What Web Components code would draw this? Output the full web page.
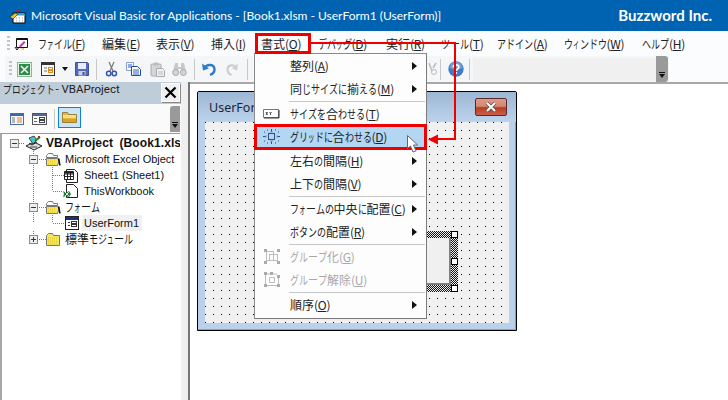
<!DOCTYPE html>
<html lang="ja"><head><meta charset="utf-8"><title>VBE</title>
<style>
html,body{margin:0;padding:0;background:#fff}
body{width:728px;height:400px;overflow:hidden;font-family:"Noto Sans CJK JP","Noto Sans",sans-serif}
</style></head><body>
<vbe-app></vbe-app>
<script>
const FONT='"Noto Sans CJK JP","Noto Sans",sans-serif';
const ICONS={
 titleapp:[16,16,'<path d="M3 5h12v10H3z" fill="#fff" stroke="#000"/><path d="M3.500 5.500h11v2h-11z" fill="#2ea3d8"/><path d="M6 1.500q3-1.500 4 1.500l-2 1.500z" fill="#c4161c"/><path d="M0 9l5-4 3 1-5 5z" fill="#f2c230" stroke="#222" stroke-width=".6"/><path d="M6 10h1M9 10h1M12 10h1M6 13h1M9 13h1M12 13h1" stroke="#999"/>'],
 menuapp:[14,14,'<path d="M2.500 1.500h11v9h-11z" fill="#fff" stroke="#111"/><path d="M3 2h10v1H3z" fill="#111"/><path d="M5 9l5-5 1.500 1.500-5 5z" fill="#c23bb0"/><path d="M1 10l2 3 2-3" fill="none" stroke="#111"/><path d="M6 12l4-1v2z" fill="#e6c52c"/>'],
 excel:[15,15,'<rect x=".5" y=".5" width="14" height="14" fill="#e8f3e8" stroke="#1c7a37" stroke-dasharray="1 1"/><rect x="2" y="2" width="11" height="11" fill="#2e8b4a"/><path d="M4 4l7 7M11 4l-7 7" stroke="#e8f5e8" stroke-width="1.600"/>'],
 form:[14,14,'<rect x=".5" y=".5" width="13" height="13" fill="#f7f7f7" stroke="#333"/><rect x="1" y="1" width="12" height="2" fill="#333"/><path d="M3 6h3M3 9h3" stroke="#777"/><rect x="7.500" y="5.500" width="4" height="2" fill="#fff" stroke="#e08b1c"/><rect x="7.500" y="8.500" width="4" height="2" fill="#fff" stroke="#e08b1c"/>'],
 save:[14,14,'<path d="M.5.500h12l1 1v12H.5z" fill="#5569bd" stroke="#414f95"/><rect x="3" y="1" width="8" height="6" fill="#e9ecf8"/><rect x="3.500" y="9" width="7" height="4.500" fill="#c8cfe8"/><rect x="7.500" y="10" width="2" height="3" fill="#414f95"/>'],
 cut:[11,15,'<path d="M3 0l4 9M8 0L4 9" stroke="#777" stroke-width="1.200" fill="none"/><circle cx="2.700" cy="11.500" r="2.200" fill="none" stroke="#2f55b5" stroke-width="1.500"/><circle cx="8.300" cy="11.500" r="2.200" fill="none" stroke="#2f55b5" stroke-width="1.500"/>'],
 copy:[15,14,'<path d="M.5.500h7v8h-7z" fill="#f4f7fd" stroke="#8aa0c8"/><path d="M5.500 4.500h6l3 3v6h-9z" fill="#fff" stroke="#1f4da0"/><path d="M7 8h6M7 10h6M7 12h6M2 3h4M2 5h3" stroke="#2a62c2"/>'],
 paste:[15,15,'<rect x="1" y="2" width="10" height="12" rx="1" fill="#d6d6d6" stroke="#aaa"/><rect x="4" y="0.500" width="4" height="3" fill="#bbb"/><path d="M6.500 6.500h6l2 2v6h-8z" fill="#f2f2f2" stroke="#aaa"/><path d="M8 10h5M8 12h5" stroke="#bbb"/>'],
 find:[15,14,'<path d="M3 1h3v4h3V1h3l2 9H9V7H6v3H1z" fill="#c8c8c8"/><circle cx="3.700" cy="10.500" r="3" fill="#d4d4d4" stroke="#aaa"/><circle cx="11.300" cy="10.500" r="3" fill="#d4d4d4" stroke="#aaa"/>'],
 undo:[14,14,'<path d="M2.500 6C5 1.500 12.500 2 12.500 7.500 12.500 10 10.500 12 8 13" fill="none" stroke="#2d7ac9" stroke-width="2.400"/><path d="M0 1.500l1 7 6-2z" fill="#2d7ac9"/>'],
 redo:[12,14,'<path d="M10 6C8 2 1.500 2.500 1.500 7.500 1.500 10 3 12 5.500 13" fill="none" stroke="#cfcfcf" stroke-width="2.200"/><path d="M12 1.500l-1 7-5-2z" fill="#cfcfcf"/>'],
 help:[16,16,'<circle cx="8" cy="8" r="7.700" fill="#3f7cc4"/><path d="M1.500 7a6.500 6.500 0 0 1 13 0q-6.500 3-13 0" fill="#6d9fd8"/><path d="M5.300 6.200q.2-2.400 2.800-2.400 2.700 0 2.700 2.200 0 1.300-1.500 2.200-1 .6-1 1.800" fill="none" stroke="#fff" stroke-width="1.700"/><rect x="7.300" y="11" width="1.800" height="1.800" fill="#fff"/>'],
 find2:[10,14,'<path d="M1 1l3 8M8 1L5 6" stroke="#bbb" stroke-width="1.500" fill="none"/><circle cx="6" cy="10" r="2.500" fill="none" stroke="#bbb"/>'],
 code:[14,12,'<rect x=".5" y=".5" width="13" height="11" fill="#f4f7fd" stroke="#4a6ea9"/><rect x="1" y="1" width="12" height="2" fill="#3f63a8"/><path d="M2 5h3M2 7h3M2 9h3" stroke="#777"/><path d="M7 5h5M7 7h5M7 9h5" stroke="#e08030"/>'],
 obj:[15,12,'<rect x=".5" y=".5" width="14" height="11" fill="#f4f7fd" stroke="#555"/><rect x="1" y="1" width="13" height="2" fill="#506a96"/><path d="M2 5.500h3M2 8.500h3" stroke="#666"/><rect x="7.500" y="4.500" width="5" height="2" fill="#fff" stroke="#444"/><rect x="7.500" y="7.500" width="5" height="2" fill="#fff" stroke="#444"/>'],
 folderbig:[15,12,'<path d="M.5 1.500h5l1 2h8v8H.5z" fill="#e8b63a" stroke="#8a6a20" stroke-width=".8"/><path d="M1 4h13v3H1z" fill="#f7e08a"/><path d="M1 8h13v3H1z" fill="#d9a32a"/>'],
 vba:[18,16,'<path d="M1 11l8-4 8 4-8 4z" fill="#ddd" stroke="#222"/><path d="M4 3l5-2 3 4-4 4z" fill="#49c4d4" stroke="#222" stroke-width=".8"/><path d="M10 6l5-4" stroke="#1a8a1a" stroke-width="2"/><path d="M13 1h2v2h-2z" fill="#c61818"/><path d="M4 8l3 2 5-3" stroke="#222" fill="none"/><path d="M5 12h7" stroke="#444"/>'],
 sheet:[14,15,'<path d="M2.500 1.500h8l3 3v10h-11z" fill="#fff" stroke="#222"/><path d="M.5 3.500h9v8h-9z" fill="#fff" stroke="#222"/><path d="M1 6h8M1 8.500h8M3.500 4v7M6.500 4v7" stroke="#222"/><rect x="1" y="4" width="8.500" height="1.500" fill="#222"/>'],
 wb:[15,16,'<path d="M3.500 1.500h7l4 4v9h-11z" fill="#fff" stroke="#222"/><path d="M0 8l3 2 3-2 2 3-2 3-3-1-3 1 1-3z" fill="#1f7a38"/><path d="M2 9l4 4M6 9l-4 4" stroke="#cfe8cf"/>'],
 uf:[14,14,'<rect x=".5" y=".5" width="13" height="13" fill="#fff" stroke="#222"/><rect x="1" y="1" width="12" height="3" fill="#1b2f8a"/><path d="M3 6.500h2M3 9.500h2" stroke="#333"/><rect x="6.500" y="5.500" width="5" height="2" fill="#fff" stroke="#333"/><rect x="6.500" y="8.500" width="5" height="2" fill="#fff" stroke="#333"/>'],
 fit:[17,14,'<path d="M.5 2.500h15v8H.5z" fill="#fff" stroke="#777"/><path d="M1 11h15V3" stroke="#333" fill="none"/><path d="M3 5l1.500 3M4.500 5L3 8M6.500 5l1 1.500 1-1.500M7.500 6.500V8" stroke="#222" fill="none" stroke-width=".8"/>'],
 grid:[17,15,'<rect x="5.500" y="4.500" width="6" height="6" fill="#b7d5ef" stroke="#2a4f80"/><path d="M8.500 0v3M8.500 12v3M0 7.500h3M14 7.500h3" stroke="#2a4f80"/><path d="M1 3h1M4 1h1M12 1h1M15 3h1M1 12h1M4 14h1M12 14h1M15 12h1" stroke="#2a4f80"/><path d="M7 3h3M7 12h3M3 6v3M14 6v3" stroke="#7aa3cc"/>'],
 group:[16,15,'<g fill="none" stroke="#bcbcbc"><rect x="2.500" y="2.500" width="7" height="9"/><rect x="5.500" y="5.500" width="8" height="6"/></g><g fill="#aaa"><rect x="0" y="0" width="3" height="3"/><rect x="13" y="0" width="3" height="3"/><rect x="0" y="12" width="3" height="3"/><rect x="13" y="12" width="3" height="3"/></g>'],
 ungroup:[16,15,'<path d="M3 2h10M1.500 3v9M14.500 3v9M3 13.500h10" stroke="#bcbcbc"/><path d="M5.500 5.500h5v5h-5z" fill="none" stroke="#bcbcbc"/><g fill="#aaa"><rect x="0" y="0" width="3" height="3"/><rect x="6" y="0" width="3" height="3"/><rect x="13" y="3" width="3" height="3"/><rect x="0" y="12" width="3" height="3"/><rect x="13" y="12" width="3" height="3"/></g>']
};
const svg=(n)=>{const i=ICONS[n];return `<svg width="${i[0]}" height="${i[1]}" viewBox="0 0 ${i[0]} ${i[1]}" style="display:block;overflow:visible">${i[2]}</svg>`};
const def=(name,css,html)=>{customElements.define(name,class extends HTMLElement{
  constructor(){super();this.attachShadow({mode:'open'})}
  connectedCallback(){const h=typeof html==='function'?html(this):html;this.shadowRoot.innerHTML=`<style>${css}</style>${h}`}
})};
const SMALL='ァィゥェォッャュョぁぃぅぇぉっゃゅょ';
function jpHtml(t,k){
  let out='';
  for(const c of t){
    if(/[\u3040-\u30ff]/.test(c)){
      const w=SMALL.includes(c)?6.5:(c==='ー'?10:9);
      out+=`<span style="display:inline-block;width:${w}px;transform:scaleX(${w/12});transform-origin:0 50%">${c}</span>`;
    } else out+=c;
  }
  if(k) out+=`<span style="letter-spacing:-.3px">(<u>${k}</u>)</span>`;
  return out;
}
def('jp-t',':host{display:inline-block;white-space:nowrap}u{text-underline-offset:1px}',e=>jpHtml(e.getAttribute('t'),e.getAttribute('k')));
def('ui-icon',':host{display:block;flex:none}',e=>svg(e.getAttribute('n')));

def('vbe-title',`:host{display:flex;align-items:center;height:31px;background:#0063b1;color:#fff;font:12px/31px Lato,"Noto Sans",sans-serif;padding-left:10px;box-sizing:border-box}
.t{margin-left:5px;white-space:nowrap;flex:1}.b{font:700 15px/31px Lato,"Noto Sans",sans-serif;margin-right:16px}`,
`<ui-icon n="titleapp"></ui-icon><span class="t">Microsoft Visual Basic for Applications - [Book1.xlsm - UserForm1 (UserForm)]</span><span class="b">Buzzword Inc.</span>`);

def('vbe-grip',':host{display:block;flex:none;width:3px;background:repeating-linear-gradient(#c4c4c4 0 2px,transparent 2px 4px)}','');

def('vbe-menubar',`:host{display:flex;align-items:center;height:25px;background:#fbfcfd;padding-left:7px;box-sizing:border-box;font-size:12px;color:#222}
vbe-grip{height:15px}ui-icon{margin:0 10px 0 4px}.m{display:flex;gap:17px}`,
()=>`<vbe-grip></vbe-grip><ui-icon n="menuapp"></ui-icon><div class="m">${[['ファイル','F',47],['編集','E',37],['表示','V',38],['挿入','I',33],['書式','O',40],['デバッグ','D',51],['実行','R',38],['ツール','T',39],['アドイン','A',50],['ウィンドウ','W',61],['ヘルプ','H',44]].map(a=>`<jp-t t="${a[0]}" k="${a[1]}" style="width:${a[2]}px"></jp-t>`).join('')}</div>`);

def('vbe-toolbar',`:host{display:flex;align-items:center;height:26px;width:664px;margin-left:5px;background:#f5f6f7;border-radius:3px 0 0 0;box-sizing:border-box;padding-left:4px}
vbe-grip{height:16px;margin-right:5px}.s{flex:none;width:1px;height:21px;background:#c8c8c8}.a{flex:none;width:0;height:0;border:3px solid transparent;border-top:4px solid #111;border-bottom:0}
.c{flex:none;width:183px;height:23px;background:#f0f0f0;margin-left:3px}.g{flex:none;width:12px;height:26px;background:#9a9a9a;border-radius:0 3px 3px 0;position:relative}
.g:after{content:"";position:absolute;left:3px;bottom:4px;width:0;height:0;border:3px solid transparent;border-top:4px solid #111;border-bottom:0}
.g:before{content:"";position:absolute;left:3px;bottom:9px;width:6px;height:1px;background:#111}`,
`<vbe-grip></vbe-grip>
<ui-icon n="excel"></ui-icon><ui-icon n="form" style="margin-left:9px"></ui-icon><i class="a" style="margin-left:7px"></i><ui-icon n="save" style="margin-left:7px"></ui-icon>
<i class="s" style="margin-left:7px"></i><ui-icon n="cut" style="margin-left:9px"></ui-icon><ui-icon n="copy" style="margin-left:9px"></ui-icon><ui-icon n="paste" style="margin-left:9px"></ui-icon><ui-icon n="find" style="margin-left:7px"></ui-icon>
<i class="s" style="margin-left:7px"></i><ui-icon n="undo" style="margin-left:7px"></ui-icon><ui-icon n="redo" style="margin-left:10px"></ui-icon><i class="s" style="margin-left:9px"></i>
<ui-icon n="find2" style="margin-left:180px"></ui-icon><i class="s" style="margin-left:2px"></i><ui-icon n="help" style="margin-left:7px"></ui-icon><i class="s" style="margin-left:5px"></i><div class="c"></div><div class="g"></div>`);

const dv=(x,a,b)=>`<path d="M${x}.5 ${a}V${b}" stroke="#7a7a7a" stroke-dasharray="1 1"/>`;
const dh=(a,b)=>`<path d="M${a} 8.500H${b}" stroke="#7a7a7a" stroke-dasharray="1 1"/>`;
const box=(x,plus)=>`<rect x="${x}.5" y="4.500" width="8" height="8" fill="#eee" stroke="#888"/><path d="M${x+2} 8.500h5" stroke="#335"/>${plus?`<path d="M${x+4}.5 6v5" stroke="#335"/>`:''}`;
const place=(n,x,y)=>`<g transform="translate(${x} ${y})">${ICONS[n][2]}</g>`;
const openF=(x)=>`<g transform="translate(${x} 2)"><path d="M.5 2.500l2-2h4l1 2h4v2h-11z" fill="#fff" stroke="#777"/><path d="M.5 5.500h11l2 1-2 6h-11z" fill="#f6e65a" stroke="#777"/><path d="M12.500 5.500l1.500 7" stroke="#111" stroke-width="1.500"/><path d="M2 7h8M2 9h8M2 11h8" stroke="#e0c62a" stroke-dasharray="1 1"/></g>`;
const closedF=(x)=>`<g transform="translate(${x} 2)"><path d="M.5 2.500l2-2h4l1 2h6v10H.5z" fill="#f6e65a" stroke="#777"/><path d="M2 5h10M2 7h10M2 9h10M2 11h10" stroke="#dcc22a" stroke-dasharray="1 1"/></g>`;
const GUT={
 root:[46,dv(33,12,16)+dh(19,25)+box(10)+place('vba',25,0)],
 excelobj:[65,dv(33,0,16)+dv(52,12,16)+dh(37,46)+box(29)+openF(46)],
 s1:[84,dv(33,0,16)+dv(52,0,16)+dh(53,64)+place('sheet',64,1)],
 tw:[84,dv(33,0,16)+dv(52,0,8)+dh(53,63)+place('wb',63,0)],
 frm:[65,dv(33,0,16)+dv(52,12,16)+dh(37,46)+box(29)+openF(46)],
 uf:[84,dv(33,0,8)+dv(52,0,8)+dh(53,65)+place('uf',65,1)],
 mod:[65,dv(33,0,8)+dh(37,46)+box(29,true)+closedF(46)]
};
def('tree-row',`:host{display:flex;height:16px;align-items:center;white-space:nowrap;font:11px/16px "Liberation Sans",sans-serif;color:#111}
svg{flex:none;display:block;margin-left:-2px}
:host([bold]) .t{font-size:12px;font-weight:700;letter-spacing:.1px;word-spacing:3px}:host([sel]) .t{background:#f0f0f0;margin-left:-2px;padding:0 3px 0 2px}
:host([j]) .t{font:12px/16px ${FONT}}`,
e=>{const g=GUT[e.getAttribute('g')];return `<svg width="${g[0]}" height="16" viewBox="0 0 ${g[0]} 16">${g[1]}</svg><span class="t"><slot></slot></span>`});

def('project-panel',`:host{display:flex;flex-direction:column;flex:none;width:181px;overflow:hidden;background:#fff}
.h{height:22px;background:#bfcddb;display:flex;font-size:11.500px;color:#222;padding-left:3px;box-sizing:border-box}
.h jp-t{line-height:15px;margin-right:1px}.h span.v{flex:1;line-height:15px;font-family:Roboto,sans-serif}.x{flex:none;width:19px;height:19px;margin:1px 1px 0 0;background:#f0f0f0;border:1px solid #fff;box-shadow:1px 1px 0 #888;box-sizing:border-box;display:flex;align-items:center;justify-content:center}
.b{height:29px;background:#fafafa;display:flex;align-items:center;padding-left:10px;box-sizing:border-box}
.b .s{width:1px;height:20px;background:#c8c8c8;margin:0 3px 0 7px}.o{width:23px;height:21px;background:#cde4f7;border:1px solid #0a84d6;box-sizing:border-box;display:flex;align-items:center;justify-content:center;margin-bottom:3px}
.g{width:10px;height:26px;background:#9a9a9a;margin-left:auto;margin-right:1px;border-radius:3px 0 0 0;position:relative}.g:after{content:"";position:absolute;left:2px;bottom:4px;border:3px solid transparent;border-top:4px solid #111;border-bottom:0}.g:before{content:"";position:absolute;left:2px;bottom:9px;width:6px;height:1px;background:#111}
.t{flex:1;border-top:1px solid #999;border-left:2px solid #a8a8a8;padding-top:1px;overflow:hidden;font-size:12px;margin-right:1px}`,
`<div class="h"><jp-t t="プロジェクト"></jp-t><span class="v">- VBAProject</span><div class="x"><svg width="13" height="13"><path d="M1.500 1.500l10 10M11.500 1.500l-10 10" stroke="#000" stroke-width="2.200"/></svg></div></div>
<div class="b"><ui-icon n="code"></ui-icon><ui-icon n="obj" style="margin-left:8px"></ui-icon><i class="s"></i><div class="o"><ui-icon n="folderbig"></ui-icon></div><div class="g"></div></div>
<div class="t">
<tree-row g="root" bold>VBAProject (Book1.xls</tree-row>
<tree-row g="excelobj">Microsoft Excel Object</tree-row>
<tree-row g="s1">Sheet1 (Sheet1)</tree-row>
<tree-row g="tw">ThisWorkbook</tree-row>
<tree-row g="frm" j><jp-t t="フォーム"></jp-t></tree-row>
<tree-row g="uf" sel>UserForm1</tree-row>
<tree-row g="mod" j><jp-t t="標準モジュール"></jp-t></tree-row>
</div>`);

def('form-window',`:host{display:flex;flex-direction:column;width:320px;height:240px;box-sizing:border-box;border:1px solid #000;background:#b9d1ea;border-radius:2px 2px 0 0;box-shadow:inset -1px -1px 0 #3cc4dc}
.c{height:30px;flex:none;display:flex;align-items:center;padding:0 9px 0 11px;background:linear-gradient(#9db6d3,#bcd3ec);font:12.500px "Noto Sans",sans-serif;color:#1a2533}
.c span{flex:1}.x{width:32px;height:18px;border:1px solid #5b2a2a;border-radius:2px;background:linear-gradient(#dd9a88 0,#d68872 45%,#b83c22 55%,#c9604a);box-sizing:border-box;display:flex;align-items:center;justify-content:center}
.g{position:relative;margin:0 7px 0 7px;height:201px;background:conic-gradient(at 1px 1px,transparent 75%,#000 0) 0 0/8px 8px,#f0f0f0}
.ctl{position:absolute;left:90px;top:109px;width:163px;height:61px;box-sizing:border-box;background:repeating-conic-gradient(#111 0 25%,#f0f0f0 0 50%) 0 0/2px 2px}
.ctl b{position:absolute;left:0;right:7px;top:7px;bottom:7px;background:#f0f0f0;border-right:2px solid #808080;border-bottom:2px solid #808080}
.ctl i{position:absolute;right:0;width:7px;height:7px;box-sizing:border-box;background:#fff;border:1px solid #000}`,
`<div class="c"><span>UserForm1</span><div class="x"><svg width="14" height="10"><path d="M3 1l8 8M11 1l-8 8" stroke="#555" stroke-width="3.500"/><path d="M3 1l8 8M11 1l-8 8" stroke="#fff" stroke-width="2"/></svg></div></div>
<div class="g"><div class="ctl"><b></b><i style="top:0"></i><i style="top:27px"></i><i style="top:54px"></i></div></div>`);

def('menu-row',`:host{display:flex;height:23px;align-items:center;font-size:12px;color:#222;white-space:nowrap;box-sizing:border-box;position:relative}
.i{flex:none;width:35px;display:flex;justify-content:center;padding-right:2px;box-sizing:border-box}
.l{flex:1}.a{flex:none;width:0;height:0;border:4px solid transparent;border-left:5px solid #111;border-right:0;margin-right:9px}
:host([disabled]){color:#a8a8a8}:host([hi]){background:#b3d7f3;box-shadow:inset 0 0 0 1px #0a6fc2}`,
e=>{const ic=e.getAttribute('icon');return `<div class="i">${ic?svg(ic):''}</div><jp-t class="l" t="${e.getAttribute('t')}" k="${e.getAttribute('k')}"></jp-t>${e.hasAttribute('arrow')?'<i class="a"></i>':''}`});
def('menu-sep',`:host{display:block;height:2px;margin-left:34px;margin-right:1px;box-sizing:border-box;border-bottom:1px solid #c8c8c8}`,'');
def('popup-menu',`:host{display:block;position:absolute;left:254px;top:53px;width:173px;height:266px;box-sizing:border-box;background:#fdfdfd;border:1px solid #8a8a8a;border-right-color:#7a7a7a;border-bottom-color:#7a7a7a;z-index:2}`,'<slot></slot>');

def('vbe-app',`:host{display:block;position:relative;width:728px;height:400px;overflow:hidden;background:#fff}
.bar{background:#fbfcfd;height:26px}.main{display:flex;height:318px}
.sp{flex:none;width:7px;background:#f0f0f0;border-right:2px solid #757575}
.r{flex:1;border-top:2px solid #a8a8a8;padding:7px 0 0 7px;background:#fff}
svg.o{position:absolute;left:0;top:0;z-index:3;pointer-events:none}`,
`<vbe-title></vbe-title><vbe-menubar></vbe-menubar><div class="bar"><vbe-toolbar></vbe-toolbar></div>
<div class="main"><project-panel></project-panel><div class="sp"></div><div class="r"><form-window></form-window></div></div>
<popup-menu>
<menu-row t="整列" k="A" arrow></menu-row><menu-row t="同じサイズに揃える" k="M" arrow></menu-row><menu-sep></menu-sep>
<menu-row t="サイズを合わせる" k="T" icon="fit"></menu-row><menu-row t="グリッドに合わせる" k="D" icon="grid" hi></menu-row><div style="height:1px"></div>
<menu-row t="左右の間隔" k="H" arrow></menu-row><menu-row t="上下の間隔" k="V" arrow></menu-row><menu-sep></menu-sep>
<menu-row t="フォームの中央に配置" k="C" arrow></menu-row><menu-row t="ボタンの配置" k="R" arrow></menu-row><menu-sep></menu-sep>
<menu-row t="グループ化" k="G" icon="group" disabled></menu-row><menu-row t="グループ解除" k="U" icon="ungroup" disabled></menu-row><menu-sep></menu-sep>
<menu-row t="順序" k="O" arrow></menu-row>
</popup-menu>
<svg class="o" width="728" height="400" viewBox="0 0 728 400">
<rect x="256.500" y="34.500" width="53" height="18" fill="none" stroke="#ee0000" stroke-width="3"/>
<rect x="255.500" y="125.500" width="170" height="23" fill="none" stroke="#ee0000" stroke-width="3"/>
<path d="M311 43H455V139H434" fill="none" stroke="#ee0000" stroke-width="2"/><path d="M428 139.500l10-5v10z" fill="#ee0000"/>
<path d="M407.500 135.500v13l3-2.500 2.500 6 3-1.200-2.600-5.800h4.200z" fill="#fff" stroke="#666"/>
</svg>`);
</script></body></html>
